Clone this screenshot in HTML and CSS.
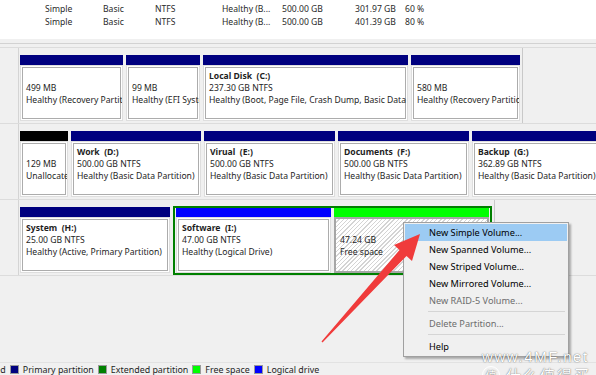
FILE: index.html
```html
<!DOCTYPE html>
<html lang="en">
<head>
    <meta charset="UTF-8">
    <meta name="viewport" content="width=device-width, initial-scale=1.0">
    <title>Disk Management</title>
    <link rel="stylesheet" href="styles.css">
</head>
<body>
    <div class="volume-list">
        <div class="vol-row">
            <span>Simple</span><span>Basic</span><span>NTFS</span><span>Healthy (B...</span><span>500.00 GB</span><span>301.97 GB</span><span>60 %</span>
        </div>
        <div class="vol-row">
            <span>Simple</span><span>Basic</span><span>NTFS</span><span>Healthy (B...</span><span>500.00 GB</span><span>401.39 GB</span><span>80 %</span>
        </div>
    </div>
    <div class="splitter"></div>

    <div class="graph">
        <!-- Disk 0 -->
        <div class="disk">
            <div class="disk-label"></div>
            <div class="parts">
                <div class="part" style="width:103px">
                    <div class="bar primary"></div>
                    <div class="body"><div>&nbsp;</div><div>499 MB</div><div>Healthy (Recovery Partition)</div></div>
                </div>
                <div class="part" style="width:74px">
                    <div class="bar primary"></div>
                    <div class="body"><div>&nbsp;</div><div>99 MB</div><div>Healthy (EFI System Partition)</div></div>
                </div>
                <div class="part" style="width:205px">
                    <div class="bar primary"></div>
                    <div class="body"><div class="label">Local Disk  (C:)</div><div>237.30 GB NTFS</div><div>Healthy (Boot, Page File, Crash Dump, Basic Data Partition)</div></div>
                </div>
                <div class="part" style="width:109px">
                    <div class="bar primary"></div>
                    <div class="body"><div>&nbsp;</div><div>580 MB</div><div>Healthy (Recovery Partition)</div></div>
                </div>
            </div>
        </div>

        <!-- Disk 1 -->
        <div class="disk">
            <div class="disk-label"></div>
            <div class="parts open">
                <div class="part" style="width:48px">
                    <div class="bar unalloc"></div>
                    <div class="body"><div>&nbsp;</div><div>129 MB</div><div>Unallocated</div></div>
                </div>
                <div class="part" style="width:130px">
                    <div class="bar primary"></div>
                    <div class="body"><div class="label">Work  (D:)</div><div>500.00 GB NTFS</div><div>Healthy (Basic Data Partition)</div></div>
                </div>
                <div class="part" style="width:131px">
                    <div class="bar primary"></div>
                    <div class="body"><div class="label">Virual  (E:)</div><div>500.00 GB NTFS</div><div>Healthy (Basic Data Partition)</div></div>
                </div>
                <div class="part" style="width:131px">
                    <div class="bar primary"></div>
                    <div class="body"><div class="label">Documents  (F:)</div><div>500.00 GB NTFS</div><div>Healthy (Basic Data Partition)</div></div>
                </div>
                <div class="part" style="width:131px">
                    <div class="bar primary"></div>
                    <div class="body"><div class="label">Backup  (G:)</div><div>362.89 GB NTFS</div><div>Healthy (Basic Data Partition)</div></div>
                </div>
            </div>
        </div>

        <!-- Disk 2 -->
        <div class="disk">
            <div class="disk-label"></div>
            <div class="parts">
                <div class="part" style="width:150px">
                    <div class="bar primary"></div>
                    <div class="body"><div class="label">System  (H:)</div><div>25.00 GB NTFS</div><div>Healthy (Active, Primary Partition)</div></div>
                </div>
                <div class="extended">
                    <div class="part" style="width:155px">
                        <div class="bar logical"></div>
                        <div class="body"><div class="label">Software  (I:)</div><div>47.00 GB NTFS</div><div>Healthy (Logical Drive)</div></div>
                    </div>
                    <div class="part" style="width:155px">
                        <div class="bar free"></div>
                        <div class="body hatched"><div>&nbsp;</div><div>47.24 GB</div><div>Free space</div></div>
                    </div>
                </div>
            </div>
        </div>
    </div>

    <div class="legend">
        <span class="key"><i class="swatch unalloc"></i>Unallocated</span>
        <span class="key"><i class="swatch primary"></i>Primary partition</span>
        <span class="key"><i class="swatch extended-key"></i>Extended partition</span>
        <span class="key"><i class="swatch free"></i>Free space</span>
        <span class="key"><i class="swatch logical"></i>Logical drive</span>
    </div>

    <div class="context-menu">
        <div class="menu-item active">New Simple Volume...</div>
        <div class="menu-item">New Spanned Volume...</div>
        <div class="menu-item">New Striped Volume...</div>
        <div class="menu-item">New Mirrored Volume...</div>
        <div class="menu-item disabled">New RAID-5 Volume...</div>
        <div class="menu-sep"></div>
        <div class="menu-item disabled">Delete Partition...</div>
        <div class="menu-sep"></div>
        <div class="menu-item">Help</div>
    </div>

    <svg class="arrow" width="596" height="375" viewBox="0 0 596 375">
        <polygon points="420,234 412,261 406.5,256 322.5,342.5 321.5,341.5 399.5,250 394,245" fill="#f03b3b"/>
    </svg>

    <div class="watermark">
        <div class="wm-url">www.4MF.net</div>
        <div class="wm-brand"><span class="wm-logo">值</span>什么值得买</div>
    </div>
</body>
</html>
```

FILE: styles.css
```css
* {
    box-sizing: border-box;
}

body {
    margin: 0;
    width: 596px;
    height: 375px;
    overflow: hidden;
    position: relative;
    display: flex;
    flex-direction: column;
    background: #f0f0f0;
    color: #1e1e1e;
    font-family: "Noto Sans", "Open Sans", sans-serif;
    font-size: 8.6px;
}

/* volume list (top pane) */
.volume-list {
    height: 39px;
    flex-shrink: 0;
    background: #fff;
    padding: 3px 0 0 45px;
}

.vol-row {
    display: grid;
    grid-template-columns: 58px 52px 67px 60px 73px 50px 40px;
    height: 13px;
    line-height: 13px;
    white-space: nowrap;
    color: #2a2a2a;
}

.splitter {
    height: 5px;
    flex-shrink: 0;
    border-bottom: 1px solid #d2d2d2;
}

/* graphical view */
.graph {
    flex: 1;
    padding-top: 3px;
}

.disk {
    display: flex;
    height: 76px;
    border-top: 1px solid #dcdcdc;
}

.disk:last-child {
    height: 77px;
    border-bottom: 1px solid #dcdcdc;
}

.disk-label {
    width: 19px;
    flex-shrink: 0;
    border-right: 1px solid #d4d4d4;
}

.parts {
    display: flex;
    gap: 3px;
    padding: 7px 2px 2px 1px;
    border-right: 1px solid #c9c9c9;
}

.parts.open {
    flex: 1;
    overflow: hidden;
    border-right: none;
}

.part {
    display: flex;
    flex-direction: column;
    flex-shrink: 0;
}

.bar {
    height: 10px;
    flex-shrink: 0;
}

.primary { background: #00007f; }
.unalloc { background: #000; }
.logical { background: #0000ff; }
.free { background: #00ff00; }

.body {
    flex: 1;
    background: #fff;
    border: 1px solid #dedede;
    box-shadow: inset 0 0 0 1px #fff, inset 0 0 0 2px #acacac;
    padding: 4px 4px 0 5px;
    line-height: 12px;
    white-space: pre;
    overflow: hidden;
}

.body .label {
    font-weight: bold;
}

.body.hatched {
    border: 2px solid #a6a6a6;
    box-shadow: none;
    padding: 3px 4px 0 4px;
    background: repeating-linear-gradient(135deg, #fff 0 2px, #d4d4d4 2px 3px);
}

.extended {
    display: flex;
    gap: 3px;
    padding: 0 1px;
    margin: -1px 0 -2px;
    border: 2px solid #008000;
}

.extended .bar {
    height: 9px;
}

/* legend */
.legend {
    height: 13px;
    flex-shrink: 0;
    display: flex;
    align-items: center;
    gap: 4px;
    margin-left: -57px;
    border-top: 1px solid #e2e2e2;
    white-space: nowrap;
    font-size: 8.9px;
}

.key {
    display: flex;
    align-items: center;
    gap: 4px;
}

.swatch {
    width: 9px;
    height: 9px;
    border: 1px solid #9a9a9a;
}

.swatch.extended-key { background: #008000; }

/* context menu */
.context-menu {
    position: absolute;
    left: 403px;
    top: 222px;
    width: 166px;
    padding: 1px;
    background: #f0f0f0;
    border: 1px solid #a0a0a0;
    box-shadow: 2px 2px 2px rgba(0, 0, 0, 0.3);
    font-size: 9.2px;
}

.menu-item {
    height: 17px;
    line-height: 17px;
    padding-left: 24px;
    color: #000;
}

.menu-item.active {
    background: #9ccbf3;
}

.menu-item.disabled {
    color: #6d6d6d;
}

.menu-sep {
    height: 1px;
    margin: 2px 2px 3px 23px;
    background: #d5d5d5;
}

/* annotation */
.arrow {
    position: absolute;
    left: 0;
    top: 0;
    pointer-events: none;
}

.watermark {
    position: absolute;
    left: 482px;
    top: 348px;
    color: #fff;
    text-shadow: 0 0 1px rgba(0, 0, 0, 0.55), 0 0 2px rgba(0, 0, 0, 0.25);
}

.wm-url {
    font-family: "Liberation Sans", sans-serif;
    font-size: 15px;
    letter-spacing: 1.6px;
    line-height: 18px;
}

.wm-brand {
    display: flex;
    align-items: center;
    gap: 6px;
    font-family: "Noto Sans CJK SC", sans-serif;
    font-size: 15px;
    line-height: 18px;
    letter-spacing: 2px;
}

.wm-logo {
    width: 18px;
    height: 18px;
    border-radius: 50%;
    border: 1px solid #fff;
    font-size: 11px;
    line-height: 16px;
    text-align: center;
    letter-spacing: 0;
}
```
